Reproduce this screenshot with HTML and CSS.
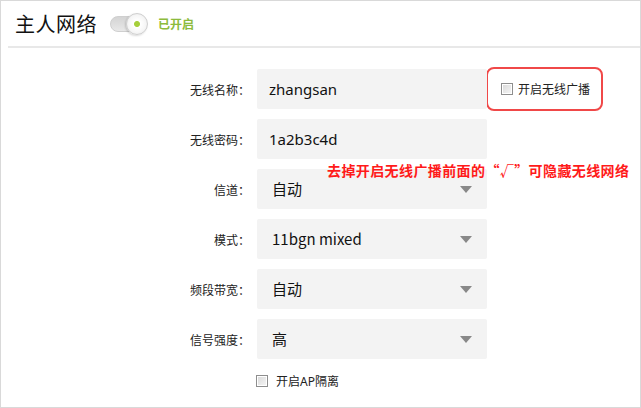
FILE: index.html
```html
<!DOCTYPE html>
<html lang="zh-CN">
<head>
  <meta charset="UTF-8">
  <title>主人网络</title>
  <link rel="stylesheet" href="styles.css">
</head>
<body>
  <section class="panel">
    <header class="panel-head">
      <h1>主人网络</h1>
      <span class="switch"><span class="knob"></span></span>
      <span class="switch-text">已开启</span>
    </header>

    <div class="form">
      <label class="label">无线名称：</label>
      <div class="field">zhangsan</div>
      <div class="extra">
        <div class="broadcast">
          <span class="check"></span>
          <span>开启无线广播</span>
        </div>
      </div>

      <label class="label">无线密码：</label>
      <div class="field">1a2b3c4d</div>
      <div class="extra"></div>

      <label class="label">信道：</label>
      <div class="field select">自动<span class="arrow"></span></div>
      <div class="extra"></div>

      <label class="label">模式：</label>
      <div class="field select">11bgn mixed<span class="arrow"></span></div>
      <div class="extra"></div>

      <label class="label">频段带宽：</label>
      <div class="field select">自动<span class="arrow"></span></div>
      <div class="extra"></div>

      <label class="label">信号强度：</label>
      <div class="field select">高<span class="arrow"></span></div>
      <div class="extra"></div>

      <div></div>
      <div class="ap">
        <span class="check"></span>
        <span>开启AP隔离</span>
      </div>
    </div>

    <p class="note">去掉开启无线广播前面的“√”可隐藏无线网络</p>
  </section>
</body>
</html>
```

FILE: styles.css
```css
* {
  margin: 0;
  padding: 0;
  box-sizing: border-box;
  font-family: "Noto Sans", "Noto Sans CJK SC", sans-serif;
}

body {
  background-color: #fff;
}

.panel {
  position: relative;
  width: 641px;
  height: 408px;
  border: 1px solid #d9d9d9;
  color: #222;
}

.panel-head {
  display: flex;
  align-items: center;
  height: 47px;
  margin-left: 7px;
  padding-left: 7px;
  border-bottom: 2px solid #e8e8e8;
}

.panel-head h1 {
  font-size: 20px;
  font-weight: normal;
  color: #111;
  font-family: "Noto Sans CJK SC", sans-serif;
  letter-spacing: 0.5px;
}

.switch {
  position: relative;
  width: 36px;
  height: 16px;
  margin-left: 13px;
  margin-top: 1px;
  border-radius: 8px;
  background: linear-gradient(#d4d4d4, #e8e8e8);
  border: 1px solid #cfcfcf;
}

.switch .knob {
  position: absolute;
  right: -3px;
  top: -4px;
  width: 22px;
  height: 22px;
  border-radius: 50%;
  background: radial-gradient(circle at 50% 50%, #a6cf3b 0 2.5px, #fff 3.5px, #f6f6f6 60%, #e3e3e3 100%);
  border: 1px solid #cfcfcf;
  box-shadow: -1px 1px 2px rgba(0, 0, 0, 0.15);
}

.switch-text {
  margin-left: 12px;
  font-size: 12px;
  font-weight: bold;
  color: #8dbb3c;
  font-family: "Noto Sans CJK SC", sans-serif;
}

.form {
  display: grid;
  grid-template-columns: 249px 230px auto;
  grid-auto-rows: 40px;
  column-gap: 7px;
  row-gap: 10px;
  padding-top: 21px;
}

.label {
  font-size: 12px;
  color: #222;
  text-align: right;
  align-self: center;
  font-family: "Noto Sans CJK SC", sans-serif;
}

.field {
  position: relative;
  height: 40px;
  padding-left: 12px;
  background-color: #f3f3f3;
  border-radius: 2px;
  font-size: 15px;
  line-height: 40px;
  color: #111;
}

.field.select {
  padding-left: 15px;
  font-family: "Noto Sans CJK SC", sans-serif;
}

.arrow {
  position: absolute;
  right: 15px;
  top: 17px;
  width: 0;
  height: 0;
  border-left: 6px solid transparent;
  border-right: 6px solid transparent;
  border-top: 7px solid #888;
}

.extra {
  display: flex;
  align-items: center;
}

.broadcast {
  display: flex;
  align-items: center;
  gap: 5px;
  flex: none;
  height: 44px;
  width: 117px;
  margin-left: -8px;
  padding-left: 13px;
  border: 2px solid #f04848;
  border-radius: 8px;
  font-size: 12px;
  font-family: "Noto Sans CJK SC", sans-serif;
}

.check {
  display: inline-block;
  width: 12px;
  height: 12px;
  border: 1px solid #8e8e8e;
  background: linear-gradient(135deg, #d8d8d8, #f7f7f7);
  box-shadow: inset 0 0 0 1px #fff;
}

.ap {
  display: flex;
  align-items: center;
  align-self: start;
  gap: 8px;
  margin-left: -1px;
  margin-top: 3px;
  font-size: 12px;
  font-family: "Noto Sans CJK SC", sans-serif;
}

.note {
  position: absolute;
  left: 326px;
  top: 159px;
  font-size: 14px;
  font-weight: bold;
  letter-spacing: 0.4px;
  color: #ff1a1a;
  font-family: "Noto Sans CJK SC", sans-serif;
}
```
